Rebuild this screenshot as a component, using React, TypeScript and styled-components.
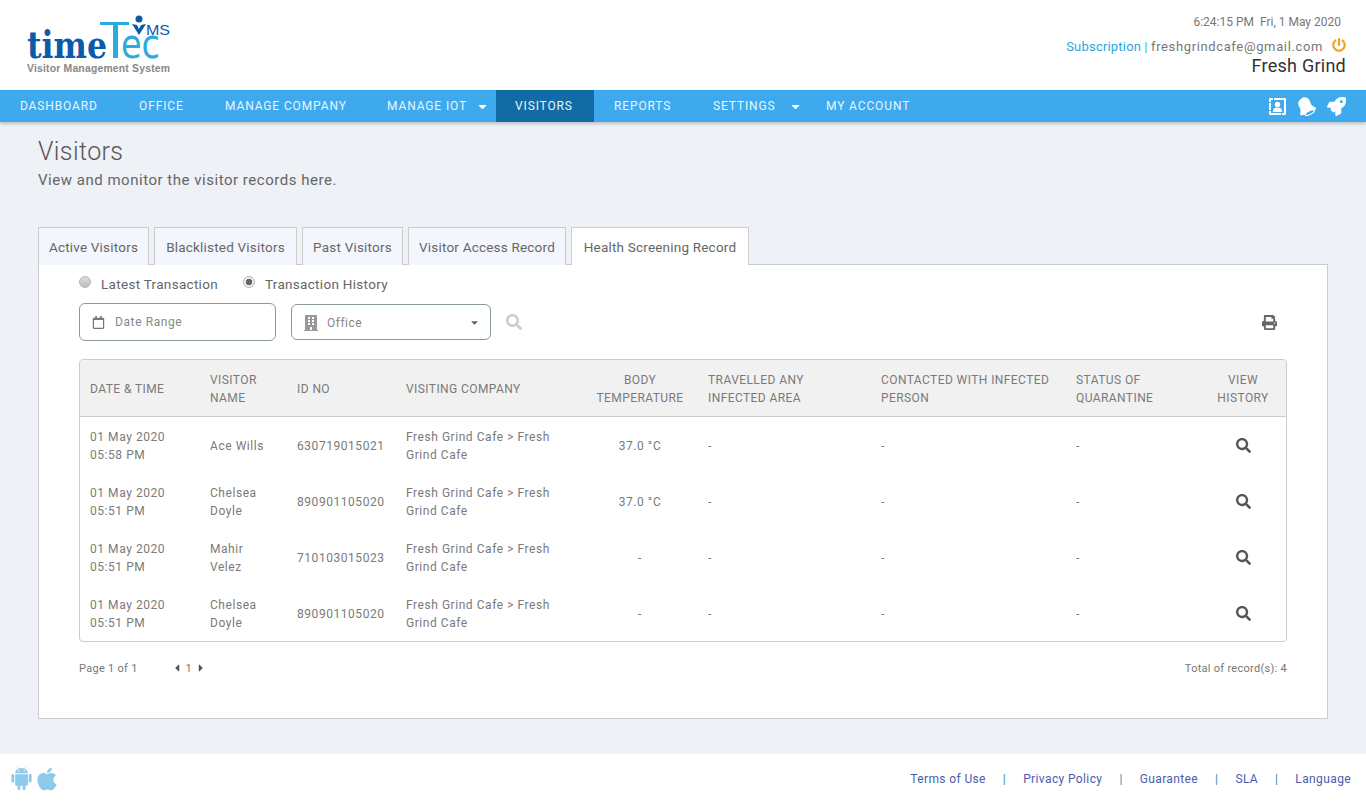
import React from "react";
import styled, { createGlobalStyle } from "styled-components";
import { FaPrint, FaSearch, FaApple, FaBuilding, FaRegCalendar, FaRocket, FaPowerOff, FaCaretDown, FaCaretLeft, FaCaretRight } from "react-icons/fa";
import { AiFillAndroid } from "react-icons/ai";

const Global = createGlobalStyle`
  html, body { margin: 0; padding: 0; background: #eef1f6; }
  body { font-family: "Roboto", "Liberation Sans", sans-serif; color: #666; }
  * { box-sizing: border-box; }
`;
const Page = styled.div`
  width: 1366px; height: 801px; overflow: hidden; display: flex; flex-direction: column; background: #eef1f6;
`;
const Header = styled.header`
  height: 90px; background: #fff; display: flex; justify-content: space-between; padding: 13px 20px 0 26px; flex: none;
`;
const Logo = styled.svg`width: 146px; height: 66px; display: block;`;
const HeaderInfo = styled.div`
  display: flex; flex-direction: column; align-items: flex-end; font-size: 13px; color: #777;
`;
const Clock = styled.div`font-size: 12px; line-height: 18px; margin-right: 5px; color: #777; letter-spacing: 0;`;
const AccountLine = styled.div`display: flex; align-items: center; margin-top: 6px; line-height: 20px; color: #777; letter-spacing: .63px;`;
const SubLink = styled.span`color: #29a7de; letter-spacing: .2px;`;
const Sep = styled.span`color: #29a7de; margin: 0 3px;`;
const Power = styled.span`color: #f0a41f; margin-left: 9px; display: flex; font-size: 14px; position: relative; top: -2px;`;
const Company = styled.div`font-size: 18px; line-height: 18px; color: #333; letter-spacing: .25px;`;
const Nav = styled.nav`
  height: 32px; background: #3fa9ee; display: flex; align-items: stretch; flex: none; box-shadow: 0 2px 3px rgba(0,0,0,.2); position: relative;
`;
const NavItem = styled.div<{ $w: number; $active?: boolean; $caretGap?: number }>`
  width: ${p => p.$w}px; display: flex; align-items: center; padding-left: ${p => p.$active ? 19 : 20}px; font-size: 12px; letter-spacing: .87px; color: #e8f5fe;
  background: ${p => p.$active ? "#126ba5" : "transparent"};
  svg { margin-left: ${p => p.$caretGap ?? 0}px; font-size: 13px; color: #fff; }
`;
const NavIcons = styled.div`margin-left: auto; display: flex; align-items: center; gap: 10px; padding-right: 20px; color: #fff; font-size: 19px;`;
const Main = styled.main`flex: 1; padding: 16px 38px 0; display: flex; flex-direction: column;`;
const Title = styled.h1`margin: 0; font-size: 25px; font-weight: 300; line-height: 28px; color: #555; letter-spacing: .4px;`;
const Subtitle = styled.p`margin: 4px 0 0; font-size: 15px; line-height: 20px; color: #666; letter-spacing: .52px;`;
const Tabs = styled.div`display: flex; gap: 5px; margin: 37px 0 0 0; position: relative; z-index: 1;`;
const Tab = styled.div<{ $active?: boolean; $w: number }>`
  width: ${p => p.$w}px; height: 38px; border: 1px solid #ccc; border-bottom: none; display: flex; align-items: center; justify-content: center;
  font-size: 13.5px; letter-spacing: .2px; color: #666; background: ${p => p.$active ? "#fff" : "#f3f7fd"};
`;
const Panel = styled.section`
  height: 455px; margin-top: -1px; border: 1px solid #ccc; background: #fff; padding: 8px 40px 0;
`;
const Radios = styled.div`display: flex; align-items: center; height: 22px; font-size: 13.5px; letter-spacing: .3px; color: #666;`;
const RadioDot = styled.span<{ $on?: boolean }>`
  width: 12px; height: 12px; border-radius: 50%; border: 1px solid #b5b5b5; margin-right: 10px; position: relative; top: -2px;
  background: ${p => p.$on ? "radial-gradient(circle, #666 0 3px, #eee 3.5px)" : "linear-gradient(#ddd,#bbb)"};
`;
const RadioLabel = styled.span`margin-right: 25px;`;
const Filters = styled.div`display: flex; align-items: center; margin-top: 8px; height: 38px;`;
const DateBox = styled.div`
  width: 197px; height: 38px; border: 1px solid #8a9a9c; border-radius: 6px; display: flex; align-items: center; padding-left: 12px; font-size: 12px; letter-spacing: .6px; color: #888;
  svg { color: #777; font-size: 13px; margin-right: 10px; }
`;
const SelectBox = styled.div`
  width: 200px; height: 36px; margin-left: 15px; border: 1px solid #8a9a9c; border-radius: 6px; display: flex; align-items: center; padding: 1px 10px 0 11px; font-size: 12px; letter-spacing: .5px; color: #888;
`;
const BuildingIcon = styled(FaBuilding)`color: #999; font-size: 16px; margin-right: 8px;`;
const SelectCaret = styled(FaCaretDown)`margin-left: auto; color: #666; font-size: 11px;`;
const GoSearch = styled(FaSearch)`color: #ccc; font-size: 16px; margin-left: 15px;`;
const PrintIcon = styled(FaPrint)`margin-left: auto; margin-right: 10px; color: #666; font-size: 15px;`;
const TableWrap = styled.div`margin-top: 18px; padding-bottom: 1px; border: 1px solid #ccc; border-radius: 4px; overflow: hidden; width: 1208px;`;
const Table = styled.table`width: 100%; border-collapse: collapse; table-layout: fixed; font-size: 12px; letter-spacing: .55px; color: #7a7a7a;`;
const Th = styled.th<{ $center?: boolean }>`
  height: 56px; background: #f1f1f1; border-bottom: 1px solid #ccc; font-weight: 400; line-height: 18px; padding: 2px ${p => p.$center ? 12 : 10}px 0 10px; color: #7a7a7a; letter-spacing: .42px;
  text-align: ${p => p.$center ? "center" : "left"};
`;
const Td = styled.td<{ $center?: boolean }>`
  height: 56px; line-height: 18px; padding: 3px ${p => p.$center ? 12 : 10}px 0 10px; text-align: ${p => p.$center ? "center" : "left"}; color: #7a7a7a;
`;
const ViewIcon = styled(FaSearch)`font-size: 15px; color: #555; display: block; margin: -1px auto 0;`;
const Pager = styled.div`display: flex; align-items: center; height: 18px; margin-top: 17px; font-size: 11px; letter-spacing: .28px; color: #777; width: 1208px;`;
const PageNums = styled.div`display: flex; align-items: center; margin-left: 33px; gap: 3px; svg { font-size: 12px; color: #555; }`;
const Total = styled.div`margin-left: auto;`;
const Footer = styled.footer`
  height: 47px; background: #fff; display: flex; align-items: center; flex: none; padding: 2px 15px 0 12px; font-size: 12px; color: #4a5cb0;
`;
const Mobile = styled.div`display: flex; align-items: center; color: #8ccbec; font-size: 26px;`;
const AndroidIcon = styled(AiFillAndroid)`font-size: 27px; margin: 0 -1px 0 -4px;`;
const FootLinks = styled.div`margin-left: auto; display: flex; align-items: center; letter-spacing: .38px;`;
const FootSep = styled.span`margin: 0 17px; color: #3b8ab0;`;

const cols = [120, 87, 109, 188, 114, 173, 195, 134, 88];
const heads: [React.ReactNode, boolean?][] = [
  ["DATE & TIME"], [<>VISITOR<br/>NAME</>], ["ID NO"], ["VISITING COMPANY"],
  [<>BODY<br/>TEMPERATURE</>, true], [<>TRAVELLED ANY<br/>INFECTED AREA</>],
  [<>CONTACTED WITH INFECTED<br/>PERSON</>], [<>STATUS OF<br/>QUARANTINE</>], [<>VIEW<br/>HISTORY</>, true],
];
const rows = [
  ["05:58 PM", "Ace Wills", "", "630719015021", "37.0 °C"],
  ["05:51 PM", "Chelsea", "Doyle", "890901105020", "37.0 °C"],
  ["05:51 PM", "Mahir", "Velez", "710103015023", "-"],
  ["05:51 PM", "Chelsea", "Doyle", "890901105020", "-"],
];
const tabs: [string, number][] = [["Active Visitors", 111], ["Blacklisted Visitors", 143], ["Past Visitors", 101], ["Visitor Access Record", 158], ["Health Screening Record", 178]];
const navs: [string, number, number?, boolean?][] = [
  ["DASHBOARD", 119], ["OFFICE", 86], ["MANAGE COMPANY", 162], ["MANAGE IOT", 129, 9], ["VISITORS", 98, undefined, true],
  ["REPORTS", 99], ["SETTINGS", 113, 13], ["MY ACCOUNT", 120],
];
const foot = ["Terms of Use", "Privacy Policy", "Guarantee", "SLA", "Language"];

const ContactIcon = () => (
  <svg width="19" height="19" viewBox="0 0 19 19" fill="#fff">
    <path d="M2 1h15a1 1 0 0 1 1 1v15a1 1 0 0 1-1 1H2a1 1 0 0 1-1-1V2a1 1 0 0 1 1-1zm1 2v13h13V3H3z" fillRule="evenodd" />
    <path d="M0 5h3v1H0zM0 13h3v1H0zM5 0h1v3H5zM13 16h1v3h-1z" fill="#3fa9ee" />
    <circle cx="9.500" cy="7.500" r="2.700" />
    <path d="M4.800 15c0-3 2-4.400 4.700-4.400s4.700 1.400 4.700 4.400z" />
  </svg>
);

const BellIcon = () => (
  <svg width="20" height="20" viewBox="1 0 18.500 18.500" fill="#fff">
    <path d="M5 2.2C7.500 .2 11 1 12.400 3.600c1 1.900 1.200 3.600 2.400 5 .8.900 2.200 1.600 3.400 2.200.6.300.7 1 .2 1.400-2.600 2-9 5.300-13.400 5.700-.7.100-1-.3-1-1 0-1.400.4-2.700.2-4.200-.2-1.700-1.500-3-2-4.700C1.600 5.800 2.900 3.800 5 2.200z" />
    <ellipse cx="12.800" cy="15.400" rx="4.600" ry="1.700" transform="rotate(-28 12.800 15.400)" fill="#3fa9ee" stroke="#fff" strokeWidth="1.100" />
  </svg>
);

export default function App() {
  return (
    <Page>
      <Global />
      <Header>
        <Logo viewBox="0 0 146 66">
          <text x="1" y="45" fontFamily="DejaVu Serif" fontWeight="700" fontSize="38" fill="#0c5ba8" textLength="80" lengthAdjust="spacingAndGlyphs">time</text>
          <path d="M74 9h29v3H92v33h-5V12H74z" fill="#29abe2" />
          <text x="95" y="45" fontFamily="DejaVu Sans" fontSize="40" fill="#29abe2" textLength="39" lengthAdjust="spacingAndGlyphs">ec</text>
          <circle cx="113" cy="6" r="3.500" fill="#0c5ba8" />
          <path d="M106 11l7 11 7-11-5 1-2 4-2-4z" fill="#0c5ba8" />
          <text x="120" y="22" fontFamily="Liberation Sans" fontSize="14.500" fill="#0c5ba8" textLength="24" lengthAdjust="spacingAndGlyphs">MS</text>
          <text x="1" y="59" fontFamily="Liberation Sans" fontWeight="700" fontSize="10.400" fill="#888" textLength="143">Visitor Management System</text>
        </Logo>
        <HeaderInfo>
          <Clock>6:24:15 PM&nbsp; Fri, 1 May 2020</Clock>
          <AccountLine><SubLink>Subscription</SubLink><Sep>|</Sep>freshgrindcafe@gmail.com<Power><FaPowerOff /></Power></AccountLine>
          <Company>Fresh Grind</Company>
        </HeaderInfo>
      </Header>
      <Nav>
        {navs.map(([t, w, g, a]) => <NavItem key={t} $w={w} $active={a} $caretGap={g}>{t}{g !== undefined && <FaCaretDown />}</NavItem>)}
        <NavIcons><ContactIcon /><BellIcon /><FaRocket /></NavIcons>
      </Nav>
      <Main>
        <Title>Visitors</Title>
        <Subtitle>View and monitor the visitor records here.</Subtitle>
        <Tabs>{tabs.map(([t, w], i) => <Tab key={t} $w={w} $active={i === 4}>{t}</Tab>)}</Tabs>
        <Panel>
          <Radios><RadioDot /><RadioLabel>Latest Transaction</RadioLabel><RadioDot $on />Transaction History</Radios>
          <Filters>
            <DateBox><FaRegCalendar />Date Range</DateBox>
            <SelectBox><BuildingIcon />Office<SelectCaret /></SelectBox>
            <GoSearch />
            <PrintIcon />
          </Filters>
          <TableWrap>
            <Table>
              <colgroup>{cols.map((w, i) => <col key={i} width={w} />)}</colgroup>
              <thead><tr>{heads.map(([h, c], i) => <Th key={i} $center={c}>{h}</Th>)}</tr></thead>
              <tbody>
                {rows.map((r, i) => (
                  <tr key={i}>
                    <Td>01 May 2020<br />{r[0]}</Td>
                    <Td>{r[1]}{r[2] && <><br />{r[2]}</>}</Td>
                    <Td>{r[3]}</Td>
                    <Td>Fresh Grind Cafe &gt; Fresh<br />Grind Cafe</Td>
                    <Td $center>{r[4]}</Td>
                    <Td>-</Td><Td>-</Td><Td>-</Td>
                    <Td $center><ViewIcon /></Td>
                  </tr>
                ))}
              </tbody>
            </Table>
          </TableWrap>
          <Pager>Page 1 of 1<PageNums><FaCaretLeft />1<FaCaretRight /></PageNums><Total>Total of record(s): 4</Total></Pager>
        </Panel>
      </Main>
      <Footer>
        <Mobile><AndroidIcon /><FaApple /></Mobile>
        <FootLinks>{foot.map((f, i) => <React.Fragment key={f}>{i > 0 && <FootSep>|</FootSep>}{f}</React.Fragment>)}</FootLinks>
      </Footer>
    </Page>
  );
}
